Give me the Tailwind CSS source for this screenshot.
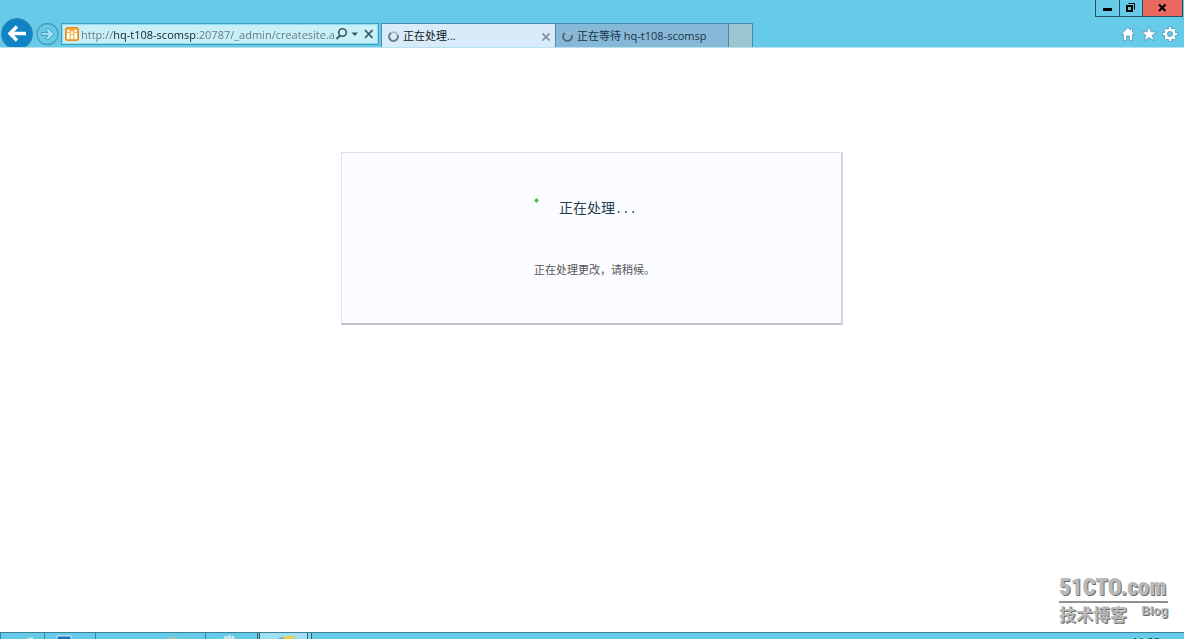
<!DOCTYPE html>
<html lang="zh-CN">
<head>
<meta charset="utf-8">
<title>正在处理...</title>
<script src="https://cdn.jsdelivr.net/npm/@tailwindcss/browser@4"></script>
</head>
<body class="relative flex min-h-screen flex-col overflow-hidden bg-white font-['Open_Sans','Noto_Sans_CJK_SC',sans-serif] text-[11px] text-[#1a2a33]">
<header class="relative flex h-12 shrink-0 items-end border-b border-[#b5e1ef] bg-[#66cae9]">
  <nav class="flex h-[30px] w-[61px] shrink-0 items-end gap-[2px] overflow-hidden pl-[1px]" aria-label="导航">
    <button aria-label="后退" class="h-[29px] w-[33px] shrink-0">
      <svg width="33" height="29" viewBox="0 0 33 29"><circle cx="16" cy="16" r="15.5" fill="#0f83c4" stroke="#2c86ad"/><path d="M25 15.5H10M16 8.500L9 15.500L16 22.500" fill="none" stroke="#fff" stroke-width="3.400"/></svg>
    </button>
    <button aria-label="前进" class="h-[26px] w-6 shrink-0">
      <svg width="24" height="26" viewBox="0 0 24 26"><circle cx="11.500" cy="13" r="10.500" fill="none" stroke="#4a9fba" stroke-width="1.300"/><path d="M5.500 11.500H12L9.500 8.500L12 7L18 13L12 19L9.500 17.500L12 14.500H5.500Z" fill="#9fe0f3" stroke="#4a9fba"/></svg>
    </button>
  </nav>
  <form class="mb-[2px] flex h-[22px] w-[318px] shrink-0 items-center border border-[#3e9dba] bg-[#c9f0f9] pl-[3px] ring-1 ring-[#8edcf0] ring-inset">
    <svg class="shrink-0" width="14" height="14" viewBox="0 0 14 14"><rect x=".5" y=".5" width="13" height="13" rx="1.500" fill="#f3a73c" stroke="#e08f24"/><path d="M2 6h3v6H2zM5.500 7.500h3V12h-3zM9 6h3v6H9z" fill="#fff"/><circle cx="3.500" cy="4" r="1.300" fill="#fff"/><circle cx="7" cy="5.500" r="1.300" fill="#fff"/><circle cx="10.500" cy="4" r="1.300" fill="#fff"/><path d="M5 7v5M9 7v5" stroke="#f3a73c" stroke-width=".7"/></svg>
    <input aria-label="地址" value="http://hq-t108-scomsp:20787/_admin/createsite.a" class="ml-[2px] h-5 w-[254px] shrink-0 bg-linear-[90deg,#5d7780_32px,#102028_32px,#102028_115px,#5d7780_115px] bg-clip-text text-transparent outline-none">
    <button type="button" aria-label="搜索" class="h-4 w-[14px] shrink-0"><svg width="14" height="16" viewBox="0 0 14 16" fill="none" stroke="#3b5660" stroke-width="1.600"><circle cx="7.500" cy="6.500" r="3.800"/><path d="M5 9.500L1.500 13" stroke-width="2"/></svg></button>
    <button type="button" aria-label="显示列表" class="h-4 w-[14px] shrink-0"><svg width="14" height="16" viewBox="0 0 14 16"><path d="M2.500 6.500h6.500L5.800 10z" fill="#3b5660"/></svg></button>
    <button type="button" aria-label="停止" class="h-4 w-[14px] shrink-0"><svg width="14" height="16" viewBox="0 0 14 16"><path d="M2 4l7.500 8M9.500 4L2 12" stroke="#3b5660" stroke-width="1.800"/></svg></button>
  </form>
  <div class="ml-[2px] flex h-6 shrink-0 border border-b-0 border-[#468ca8]" role="tablist">
    <div class="flex w-[174px] items-center border-r border-[#468ca8] bg-[#d9ebfa] pt-[2px] pr-1 pl-[6px]">
      <button role="tab" aria-selected="true" class="flex flex-1 items-center gap-1 text-left text-[#101820]">
        <svg width="11" height="11" viewBox="0 0 11 11" fill="none" stroke-width="1.800"><circle cx="5.500" cy="5.500" r="4.400" stroke="#a9b8c4"/><path d="M3 1.900A4.400 4.400 0 1 0 9.600 4" stroke="#6b7885"/></svg>正在处理...</button>
      <button aria-label="关闭标签页"><svg width="10" height="10" viewBox="0 0 10 10"><path d="M1.500 1.500l7 7M8.500 1.500l-7 7" stroke="#7b8994" stroke-width="1.700"/></svg></button>
    </div>
    <button role="tab" class="flex w-[173px] items-center gap-1 border-r border-[#468ca8] bg-[#86b8d8] pt-[2px] pl-[6px] text-[#1c3344]">
      <svg width="11" height="11" viewBox="0 0 11 11" fill="none" stroke-width="1.800"><circle cx="5.500" cy="5.500" r="4.400" stroke="#a3bccb"/><path d="M3 1.900A4.400 4.400 0 1 0 9.600 4" stroke="#4a6274"/></svg>正在等待 hq-t108-scomsp</button>
    <button aria-label="新建标签页" class="w-[23px] bg-[#9dc6d3]"></button>
  </div>
  <div class="ml-auto flex h-full flex-col items-end justify-between">
    <div class="mr-[1px] flex h-[17px] border border-t-0 border-[#24505f]">
      <button aria-label="最小化" class="w-6 border-r border-[#24505f]"><svg width="23" height="16"><path d="M7 9.500h9" stroke="#000" stroke-width="3"/></svg></button>
      <button aria-label="还原" class="w-[23px] border-r border-[#24505f]"><svg width="22" height="16" fill="none" stroke="#000"><path d="M8.500 3.500h6v6" stroke-width="1"/><rect x="7" y="6" width="5" height="5" stroke-width="2"/></svg></button>
      <button aria-label="关闭" class="w-[39px] bg-[#e9695f]"><svg width="39" height="16"><path d="M16 4.500l6.500 6.500M22.500 4.500L16 11" stroke="#000" stroke-width="2"/></svg></button>
    </div>
    <div class="mr-[6px] mb-[5px] flex gap-[5px]">
      <button aria-label="主页"><svg width="16" height="16" viewBox="0 0 16 16"><path d="M8 1.500L1 8.500H3.500V14.500H6.500V10H9.500V14.500H12.500V8.500H15L12.500 6.300V2.500H10.500V4.200Z" fill="#fff" stroke="#4b94b0" stroke-width=".7"/></svg></button>
      <button aria-label="收藏夹"><svg width="16" height="16" viewBox="0 0 16 16"><path d="M8 .5L10.100 5.800H15.600L11.200 9.200L12.900 14.800L8 11.500L3.100 14.800L4.800 9.200L.4 5.800H5.900Z" fill="#fff" stroke="#4b94b0" stroke-width=".7"/></svg></button>
      <button aria-label="工具"><svg width="16" height="16" viewBox="0 0 16 16" fill="none"><path d="M8 .6v14.800M.6 8h14.800M2.800 2.800l10.400 10.400M13.200 2.800L2.800 13.200" stroke="#4b94b0" stroke-width="3.400"/><circle cx="8" cy="8" r="4.300" stroke="#4b94b0" stroke-width="3.800"/><path d="M8 1v3M8 12v3M1 8h3M12 8h3M3.100 3.100l2 2M10.900 10.900l2 2M12.900 3.100l-2 2M5.100 10.900l-2 2" stroke="#fff" stroke-width="2.200"/><circle cx="8" cy="8" r="4.100" stroke="#fff" stroke-width="2.800"/><circle cx="8" cy="8" r="2.400" fill="#66cae9" stroke="#4b94b0" stroke-width=".6"/></svg></button>
    </div>
  </div>
</header>
<main class="flex-1 pt-[104px]">
  <section class="mx-auto w-[502px] border border-r-2 border-b-2 border-[#dfe1e8] border-r-[#d3d4dd] border-b-[#bfc0c9] bg-[#fbfcff] pt-[43px] pb-[45px] pl-[192px]">
    <h1 class="flex items-start text-[14px] leading-[22px] text-[#1f3f50]">
      <svg class="mt-[2px] mr-5" width="5" height="5" viewBox="0 0 5 5"><path d="M2.500 0L5 2.500L2.500 5L0 2.500Z" fill="#4fc345"/></svg>
      <span class="font-['Noto_Sans_CJK_SC',sans-serif]">正在处理<span class="font-['Liberation_Mono','Noto_Sans_CJK_SC',monospace] text-[12px]">...</span></span>
    </h1>
    <p class="mt-[39px] font-['Noto_Sans_CJK_SC',sans-serif] text-[11px] leading-[18px] text-[#555]">正在处理更改，请稍候。</p>
  </section>
</main>
<aside class="absolute right-4 bottom-[14px] w-[109px] text-[#b9b9b9] [text-shadow:1px_1px_0_#6d6d6d]">
  <div class="border-b-2 border-[#909090] font-['Liberation_Sans_Narrow','Roboto_Condensed','Roboto',sans-serif] text-[23px] leading-[26px] font-black whitespace-nowrap">51CTO.com</div>
  <div class="flex justify-between"><span class="font-['Noto_Sans_CJK_SC',sans-serif] text-[17px] leading-[22px] font-bold">技术博客</span><span class="pt-[1px] font-['Liberation_Sans',sans-serif] text-[12px] leading-[14px] font-bold">Blog</span></div>
</aside>
<footer class="flex h-[7px] shrink-0 overflow-hidden border-t border-[#3f7f95] bg-[#66cae9]">
  <button aria-label="服务器管理器" class="h-10 w-[45px] border-x border-[#3f8299]"><svg width="43" height="40"><path d="M20 7L32 4V12H20Z" fill="#c6e5ec"/></svg></button>
  <button aria-label="PowerShell" class="h-10 w-[51px] border-r border-[#3f8299]"><svg width="50" height="40"><path d="M12 3h14v16H12z" fill="#1a6fb8" stroke="#d7f0f8"/></svg></button>
  <button aria-label="文件资源管理器" class="h-10 w-[110px] border-r border-[#3f8299]"><svg width="109" height="40"><ellipse cx="77" cy="9" rx="7" ry="5" fill="#a5c7a4"/></svg></button>
  <button aria-label="设置" class="h-10 w-[52px] border-r border-[#2f5d6d]"><svg width="51" height="40"><circle cx="23" cy="10" r="7" fill="#c4dfe8" stroke="#e4f3f7" stroke-dasharray="2 2" stroke-width="2"/></svg></button>
  <button aria-label="Internet Explorer" class="ml-[1px] h-10 w-[49px] border-x border-[#2f5d6d] bg-[#a0e0f3]"><svg width="46" height="40"><path d="M14 12Q20 1 36 3Q33 6 24 12Z" fill="#e5cf4b"/><path d="M12 12Q16 4 24 4L20 12Z" fill="#5fb4dc"/></svg></button>
  <span class="h-10 w-1 border-r border-[#2f5d6d] bg-[#85d5ee]"></span>
  <time class="mr-6 ml-auto pt-[1px] leading-4 text-[#102a35]">11:28</time>
</footer>
</body>
</html>
